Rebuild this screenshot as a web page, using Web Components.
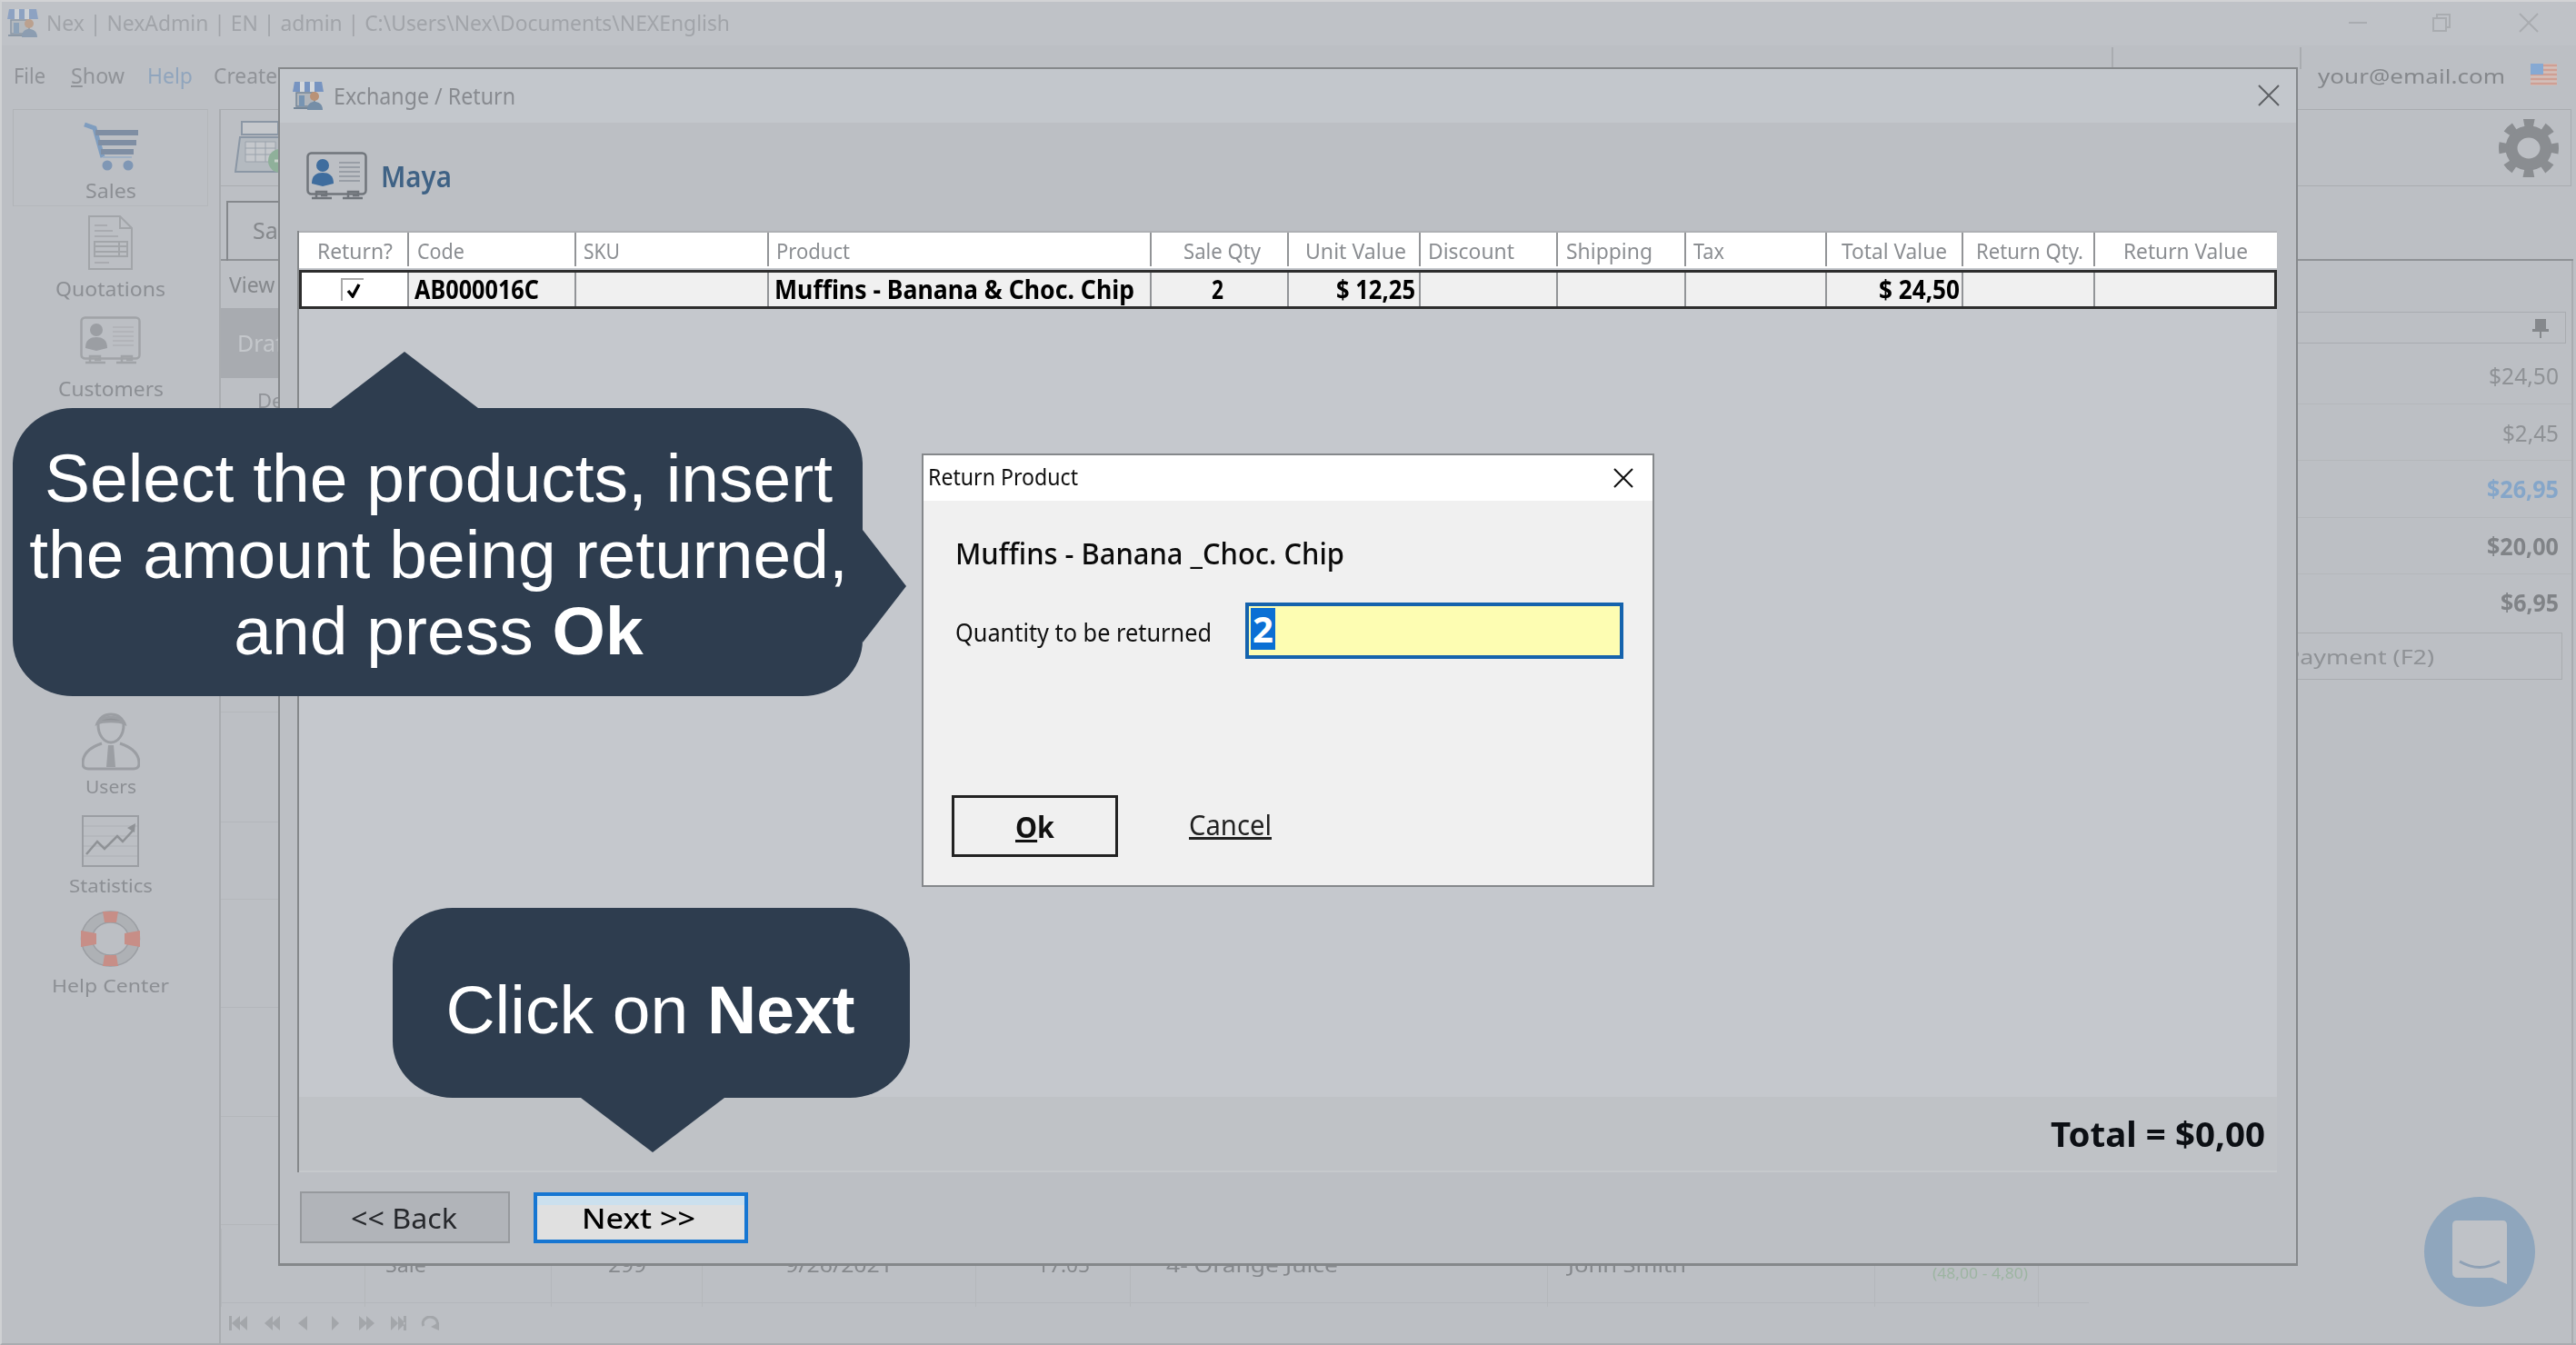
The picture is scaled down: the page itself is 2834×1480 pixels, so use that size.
<!DOCTYPE html>
<html lang="en"><head><meta charset="utf-8"><title>Exchange / Return</title>
<style>
html,body{margin:0;padding:0;background:#bcbfc4;overflow:hidden}
body{font-family:"Noto Sans","Liberation Sans",sans-serif}
</style></head><body>
<nex-app>
  <exchange-dialog></exchange-dialog>
  <return-dialog></return-dialog>
  <call-out style="left:14px;top:449px;width:935px;height:317px;padding:35px 0 0 2px" arrows="top right">
    <span>Select the products, insert</span>
    <span>the amount being returned,</span>
    <span>and press <b>Ok</b></span>
  </call-out>
  <call-out style="left:432px;top:999px;width:569px;height:209px;padding:70px 2px 0 0" arrows="bottom">
    <span>Click on <b>Next</b></span>
  </call-out>
  <chat-bubble></chat-bubble>
</nex-app>
<script>
const shop=(f=1)=>`<svg width="34" height="32" viewBox="0 0 34 32" style="opacity:${f}"><path d="M2 1h30l2 11H0z" fill="#6f8fc0"/><path d="M8 1h5v11H8zM19 1h5v11h-5z" fill="#d5d9de"/><path d="M4 13h20v15H4z" fill="#aeb4ba" stroke="#6c7f93" stroke-width="1.5"/><path d="M7 16h6v12H7z" fill="#6f8fb0"/><path d="M1 30h20" stroke="#6c7f93" stroke-width="2"/><circle cx="24" cy="17" r="5" fill="#b98d6e"/><path d="M16 32c0-7 4-9 8-9s9 2 9 9z" fill="#6d88a4"/></svg>`;
const card=(p,l,b)=>`<svg width="67" height="53" viewBox="0 0 67 53"><rect x="1.5" y="1.5" width="64" height="45" rx="4" fill="none" stroke="${b}" stroke-width="2.5"/><circle cx="18" cy="15" r="7" fill="${p}"/><path d="M6 35c0-9 5-12 12-12s12 3 12 12l-12 3z" fill="${p}"/><path d="M36 12h23M36 17h23M36 22h23M36 27h23M36 32h23" stroke="${l}" stroke-width="1.6"/><path d="M11 52v-8h11v4h-6M46 52v-8h11v4h-6" fill="none" stroke="${b}" stroke-width="2.5"/><path d="M6 51h22M40 51h22" stroke="${b}" stroke-width="2.5"/></svg>`;
const cart=`<svg width="62" height="54" viewBox="0 0 62 54"><path d="M2 3l11 4 9 32" fill="none" stroke="#7f9dbf" stroke-width="5"/><path d="M14 12h47M17 23h42M20 33h36" stroke="#7f8ea3" stroke-width="6"/><path d="M22 39h32" stroke="#9fb0c4" stroke-width="2"/><circle cx="27" cy="48" r="5.5" fill="#7f97b5"/><circle cx="50" cy="48" r="5.5" fill="#7f97b5"/></svg>`;
const doc=`<svg width="49" height="60" viewBox="0 0 49 60" fill="none" stroke="#a2a5a9" stroke-width="2"><path d="M1 1h34l13 13v45H1z"/><path d="M35 1v13h13"/><path d="M7 11h14M7 17h20M7 23h26M7 52h16" stroke-width="1.3"/><path d="M7 29h36v16H7zM7 34h36M7 40h36M34 29v16"/></svg>`;
const user=`<svg width="64" height="64" viewBox="0 0 64 64" fill="none" stroke="#9b9ea3" stroke-width="3"><path d="M18 14c0-8 7-12 14-12s14 4 14 12c0 10-6 19-14 19S18 24 18 14z"/><path d="M17 12c3-9 27-9 30 0-6-3-24-3-30 0z" fill="#8f9296"/><path d="M22 34C10 38 1 44 1 56c0 5 3 6 6 6h50c3 0 6-1 6-6 0-12-9-18-21-22"/><path d="M29 36h6l2 24h-10z" fill="#9b9ea3" stroke="none"/></svg>`;
const chart=`<svg width="63" height="57" viewBox="0 0 63 57" fill="none"><rect x="1" y="1" width="61" height="55" stroke="#9b9ea3" stroke-width="2"/><path d="M2 12h59M2 23h59M2 34h59M2 45h59" stroke="#aeb1b5" stroke-width="1.2"/><path d="M5 43l12-14 8 8 14-14 6 6 12-13" stroke="#8f9296" stroke-width="2.5"/><path d="M50 14l9-5-1 10z" fill="#8f9296"/></svg>`;
const buoy=`<svg width="67" height="64" viewBox="0 0 67 64"><ellipse cx="33.500" cy="32" rx="26" ry="24" fill="none" stroke="#aeb1b5" stroke-width="13"/><ellipse cx="33.500" cy="32" rx="32" ry="30" fill="none" stroke="#9b9ea3" stroke-width="1.500"/><ellipse cx="33.500" cy="32" rx="20" ry="18" fill="#bcbfc4" stroke="#9b9ea3" stroke-width="1.500"/><path d="M25 2h17l-2 12H27zM25 62h17l-2-12H27zM1 23l17 3v12L1 41zM66 23l-17 3v12l17 3z" fill="#c78e87"/></svg>`;
const reg=`<svg width="64" height="60" viewBox="0 0 64 60" fill="none"><rect x="8" y="1" width="40" height="14" fill="#c5c8cc" stroke="#8b97a5" stroke-width="2"/><path d="M6 18h44l6 38H1z" fill="#b4bac0" stroke="#8b97a5" stroke-width="2"/><path d="M12 23h33v22H12z" fill="#c5c8cc" stroke="#9aa2ab"/><path d="M12 30h33M12 37h33M23 23v22M34 23v22" stroke="#9aa2ab"/><circle cx="50" cy="44" r="13" fill="#8fb09a"/><path d="M44 44h12" stroke="#c9d3cc" stroke-width="3"/></svg>`;
const gear=`<svg width="66" height="64" viewBox="0 0 66 64" fill="none" stroke="#8a8d91"><ellipse cx="33" cy="32" rx="19" ry="18" stroke-width="13"/><circle cx="33" cy="32" r="28" stroke-width="10" stroke-dasharray="11 11" stroke-dashoffset="5.500"/></svg>`;
const flag=`<svg width="29" height="24" viewBox="0 0 29 24"><rect width="29" height="24" fill="#d3c0bb"/><path d="M0 2h29M0 7h29M0 12h29M0 17h29M0 22h29" stroke="#cf9f94" stroke-width="2.400"/><rect width="14" height="12" fill="#86a9d3"/></svg>`;

class Base extends HTMLElement{
  constructor(){super();this.attachShadow({mode:'open'}).innerHTML=this.constructor.html}
}
class NexApp extends Base{static html=`<style>
:host{display:block;position:relative;width:2834px;height:1480px;overflow:hidden;background:#bcbfc4;color:#909398;font-family:"Noto Sans","Liberation Sans",sans-serif;font-size:20px}
.shell{display:flex;flex-direction:column;height:1480px;box-sizing:border-box;border-top:2px solid #d2d3d5;border-left:2px solid #cfd1d3;border-bottom:2px solid #a9acb0;filter:blur(.6px)}
.title{height:48px;display:flex;align-items:center;background:#bfc2c7;flex:none;padding-bottom:3px;box-sizing:border-box}
.title .tx{font-size:24px;color:#a1a4a9}
.ctl{margin-left:auto;display:flex;margin-right:40px}
.ctl svg{display:block}
.menu{height:70px;flex:none;display:flex;align-items:center;font-size:23px;position:relative;background:#bcbfc4;padding-bottom:5px;box-sizing:border-box}
.menu .m{margin-left:13px}
.menu .sep{align-self:flex-start;width:2px;height:24px;background:#a9acb0;margin-top:2px}
.right{margin-left:auto;display:flex;align-items:center;align-self:stretch}
.mail{font-size:22px;color:#85888c;margin:0 28px 0 18px}
.body{flex:1;display:flex;min-height:0}
.side{flex:none;width:239px;border-right:2px solid #a9acb0;display:flex;flex-direction:column;align-items:center;padding-right:0}
.work{flex:1;display:flex;flex-direction:column;min-width:0;padding-right:3px}
.tools{height:85px;flex:none;border:1.500px solid #a9acb0;margin-right:2px;display:flex;align-items:center;justify-content:space-between;box-sizing:border-box;padding:0 13px 0 15px;border-left:0}
.tabs{height:82px;flex:none;border-bottom:2px solid #8f9296;box-sizing:border-box;padding:16px 0 0 6px}
.tab{display:block;width:200px;height:66px;border:2px solid #85888c;border-bottom:0;box-sizing:border-box;font-size:25px;line-height:60px;padding-left:27px;color:#85888c}
.lower{flex:1;display:flex;min-height:0;border-right:2px solid #a9acb0}
.tbl{flex:1;display:flex;flex-direction:column;min-width:0}
.view{height:52px;padding-left:9px;line-height:52px;font-size:23px;flex:none;color:#85888c}
.draft{height:77px;background:#a8abb0;color:#c4c7cb;font-size:25px;line-height:77px;padding-left:18px;flex:none;box-sizing:border-box}
.de{height:49px;padding-left:40px;line-height:48px;font-size:22px;flex:none}
.ln{flex:none;border-bottom:1.500px solid #b4b7bb;box-sizing:border-box;width:66px}
.sale{height:86px;flex:none;display:grid;grid-template-columns:158px 205px 166px 301px 170px 459px 360px 180px 66px;align-items:center;padding-top:4px;box-sizing:border-box;font-size:22px;color:#85888c;border-bottom:1.500px solid #b4b7bb}
.sale>*{height:86px;line-height:78px;border-left:1.500px solid #b4b7bb;box-sizing:border-box;white-space:nowrap;overflow:visible}
.sale .g{color:#9db5a2;font-size:16px;line-height:98px}
.pager{flex:1;display:flex;align-items:center;padding-left:9px}
.pane{flex:none;width:531px;display:flex;flex-direction:column;align-items:stretch;font-size:26px}
.ph{margin:56px 6px 4px 0;height:35px;border:1.500px solid #a9acb0;display:flex;align-items:center;justify-content:flex-end;padding-right:18px;box-sizing:border-box;flex:none}
.v{height:62.500px;flex:none;line-height:62px;text-align:right;padding-right:14px;box-sizing:border-box;border-bottom:1.500px solid #b4b7bb;color:#8f9296}
.v.b{font-weight:700;color:#808387}.v.c{font-weight:700;color:#85a6c9}
.pay{margin:1px 10px 0 75px;height:50px;border:1.500px solid #a9acb0;display:flex;align-items:center;justify-content:center;flex:none;font-size:22px;color:#8f9296}
</style>
<div class="shell">
 <div class="title"><span class="app" style="margin:0 9px 0 6px;display:flex">${shop(.62)}</span><nx-text class="tx" w="752">Nex | NexAdmin | EN | admin | C:\\Users\\Nex\\Documents\\NEXEnglish</nx-text>
  <span class="ctl"><svg width="210" height="24" viewBox="0 0 210 24" fill="none" stroke="#a9acb0" stroke-width="2"><path d="M0 12h20"/><path d="M93 7h14v14H93zM97 7V3h14v14h-4"/><path d="M188 2l20 20M208 2l-20 20"/></svg></span></div>
 <div class="menu"><nx-text class="m" w="35">File</nx-text><nx-text class="m" style="margin-left:28px" w="59"><u>S</u>how</nx-text><nx-text class="m" style="margin-left:25px;color:#90a5bd" w="50">Help</nx-text><nx-text class="m" style="margin-left:23px;color:#909398" w="70">Create</nx-text>
  <span class="right"><span class="sep" style="margin-right:205px"></span><span class="sep"></span><nx-text class="mail" w="206">your@email.com</nx-text><span style="display:flex;margin-right:21px;margin-top:-1px">${flag}</span></span></div>
 <div class="body">
  <div class="side">
   <side-item box style="height:107px;padding-top:13px" gap="12"><span slot="i">${cart}</span><nx-text style="font-size:22px" w="56">Sales</nx-text></side-item>
   <side-item style="margin-top:10px" gap="8"><span slot="i">${doc}</span><nx-text style="font-size:22px" w="121">Quotations</nx-text></side-item>
   <side-item style="margin-top:17px" gap="14"><span slot="i">${card('#9b9ea3','#aeb1b5','#a0a3a7')}</span><nx-text style="font-size:22px" w="116">Customers</nx-text></side-item>
   <div style="height:302px;line-height:24px;padding-top:280px;box-sizing:border-box;margin-left:-22px;flex:none;font-size:20px">g</div>
   <side-item style="margin-top:41px" gap="6"><span slot="i">${user}</span><nx-text w="56">Users</nx-text></side-item>
   <side-item style="margin-top:19px" gap="9"><span slot="i">${chart}</span><nx-text w="92">Statistics</nx-text></side-item>
   <side-item style="margin-top:14px" gap="8"><span slot="i">${buoy}</span><nx-text w="129">Help Center</nx-text></side-item>
  </div>
  <div class="work">
   <div class="tools"><span style="display:flex">${reg}</span><span style="display:flex">${gear}</span></div>
   <div class="tabs"><span class="tab">Sales</span></div>
   <div class="lower">
    <div class="tbl">
     <div class="view">View</div><div class="draft">Draft</div><div class="de">De</div>
     <div class="ln" style="height:319px"></div><div class="ln" style="height:121px"></div><div class="ln" style="height:85px"></div><div class="ln" style="height:119px"></div><div class="ln" style="height:120px"></div><div class="ln" style="height:119px"></div>
     <div class="sale"><span></span><span style="padding-left:22px"><nx-text w="45">Sale</nx-text></span><span style="padding-left:62px"><nx-text w="42">299</nx-text></span><span style="padding-left:91px"><nx-text w="118">9/26/2021</nx-text></span><span style="padding-left:67px"><nx-text w="58">17:05</nx-text></span><span style="padding-left:39px"><nx-text w="189">4- Orange Juice</nx-text></span><span style="padding-left:22px"><nx-text w="130">John Smith</nx-text></span><span class="g" style="padding-left:63px"><nx-text w="105">(48,00 - 4,80)</nx-text></span><span></span></div>
     <div class="pager"><svg width="232" height="16" viewBox="0 0 232 16" fill="#a3a6aa"><path d="M0 0h3v16H0zM12 0v16L3 8zM20 0v16l-9-8zM48 0v16l-9-8zM56 0v16l-9-8zM86 0v16l-10-8zM113 0v16l8-8zM143 0v16l9-8zM151 0v16l9-8zM178 0v16l8-8zM186 0v16l8-8zM192 0h3v16h-3z"/><path d="M214 11a8 7 0 1 1 13 2" fill="none" stroke="#a3a6aa" stroke-width="3"/><path d="M222 12l9 4v-9z"/></svg></div>
    </div>
    <div class="pane">
     <div class="ph"><svg width="18" height="22" viewBox="0 0 18 22" fill="#85888c"><path d="M3 1h12v11h3v3H0v-3h3zM8 15h2v7H8z"/></svg></div>
     <div class="v"><nx-text w="77">$24,50</nx-text></div><div class="v"><nx-text w="62">$2,45</nx-text></div><div class="v c"><nx-text w="79">$26,95</nx-text></div><div class="v b"><nx-text w="79">$20,00</nx-text></div><div class="v b" style="border:0"><nx-text w="64">$6,95</nx-text></div>
     <div class="pay"><nx-text w="164">Payment (F2)</nx-text></div>
    </div>
   </div>
  </div>
 </div>
</div>
<slot></slot>`}
class SideItem extends Base{static html=`<style>
:host{display:flex;flex-direction:column;align-items:center;flex:none;box-sizing:border-box}
:host([box]){width:215px;border:1.500px solid #b0b3b7;border-bottom-color:#b4b7bb;border-right-color:#b4b7bb}
.l{line-height:24px;white-space:nowrap;font-size:20px;color:#8c8f94}
.i{display:flex}
slot[name=i]::slotted(*){display:flex}
</style><div class="i"><slot name="i"></slot></div><div class="l"><slot></slot></div>`;
 connectedCallback(){this.shadowRoot.querySelector('.l').style.marginTop=(this.getAttribute('gap')-0-(this.hasAttribute('box')?3:0))+'px'}}
class ExchangeDialog extends Base{static html=`<style>
:host{position:absolute;left:306px;top:74px;width:2222px;height:1319px;box-sizing:border-box;border:2px solid #85888b;border-bottom-width:3px;display:flex;flex-direction:column;background:#bcbfc4;font-family:"Noto Sans","Liberation Sans",sans-serif;color:#000}
.t{height:59px;flex:none;background:#c3c7cc;display:flex;align-items:center;padding:0 0 2px 14px;font-size:26px;color:#888b90;box-sizing:border-box}
.t>span:first-child{display:flex;margin-right:11px}
.x{margin-left:auto;margin-right:18px;display:flex}
.who{height:119px;flex:none;display:flex;align-items:center;padding:0 0 2px 29px;box-sizing:border-box;gap:15px;font-size:33px;font-weight:600;color:#3f6285}
.panel{flex:1;min-height:0;margin:0 21px 0 19px;border-left:2px solid #85888b;display:flex;flex-direction:column;background:#c5c8cd}
.grid{display:grid;grid-template-columns:121px 184px 212px 421px 151px 145px 151px 141px 155px 150px 145px 199px;flex:none}
.h{height:41px;background:#fff;margin-bottom:2px;box-shadow:inset 0 2px #aeb0b4}
.h>span{font-size:23px;color:#8b8e92;line-height:41px;white-space:nowrap;border-right:2px solid #929497;box-sizing:border-box;height:37px;margin-top:2px}
.h>span:last-child{border:0}
.r{height:43px;outline:3px solid #2d2d2d;outline-offset:-3px;background:#f0f0f0;position:relative}
.r>span{font-size:28px;font-weight:700;line-height:43px;white-space:nowrap;border-right:2px solid #929497;box-sizing:border-box}
.r>span:last-child{border:0}
.ck{background:#fff;display:flex;align-items:center;padding-left:46px}
.box{width:25px;height:25px;border-left:2px solid #a8a8a8;border-top:2px solid #a8a8a8;box-sizing:border-box;display:flex;align-items:center;justify-content:center}
.sp{flex:1}
.tot{height:81px;flex:none;background:#bfc2c6;border-bottom:2px solid #c6c9cc;box-sizing:content-box;display:flex;align-items:center;justify-content:flex-end;padding-right:13px;font-size:37px;font-weight:700;color:#0c0f14}
.tot,.who,.t,.grid,.f{filter:blur(.4px)}
.f{height:100px;flex:none;padding:21px 0 0 22px;box-sizing:border-box;display:flex;gap:26px;font-size:31px}
.f span{height:57px;display:flex;align-items:center;justify-content:center;box-sizing:border-box}
.bk{width:231px;background:#b1b4b9;border:2px solid #96999d;color:#26282c;padding-right:3px}
.nx{width:236px;background:#e0e0e0;border:4px solid #1676d2;box-shadow:inset 0 10px #cbe0ee;font-weight:500;color:#000;margin-top:1px;height:56px!important;padding-right:5px}
</style>
<div class="t"><span>${shop(.9)}</span><nx-text w="200">Exchange / Return</nx-text><span class="x"><svg width="24" height="24" viewBox="0 0 24 24" stroke="#5e6165" stroke-width="2" fill="none"><path d="M1 1l22 22M23 1L1 23"/></svg></span></div>
<div class="who">${card('#3f6d9e','#8d949c','#70757b').replace('viewBox','style="flex:none" viewBox')}<nx-text w="78">Maya</nx-text></div>
<div class="panel">
 <div class="grid h">
  <span style="padding-left:20px"><nx-text w="83">Return?</nx-text></span><span style="padding-left:9px"><nx-text w="52">Code</nx-text></span><span style="padding-left:8px"><nx-text w="40">SKU</nx-text></span><span style="padding-left:8px"><nx-text w="81">Product</nx-text></span><span style="padding-left:35px"><nx-text w="85">Sale Qty</nx-text></span><span style="padding-left:18px"><nx-text w="111">Unit Value</nx-text></span><span style="padding-left:8px"><nx-text w="95">Discount</nx-text></span><span style="padding-left:9px"><nx-text w="95">Shipping</nx-text></span><span style="padding-left:8px"><nx-text w="34">Tax</nx-text></span><span style="padding-left:16px"><nx-text w="116">Total Value</nx-text></span><span style="padding-left:14px"><nx-text w="118">Return Qty.</nx-text></span><span style="padding-left:31px"><nx-text w="137">Return Value</nx-text></span>
 </div>
 <div class="grid r">
  <span class="ck"><i class="box"><svg width="16" height="16" viewBox="0 0 16 16" fill="none" stroke="#000" stroke-width="3.500"><path d="M2 8l5 6 7-13"/></svg></i></span><span style="padding-left:6px"><nx-text w="137">AB000016C</nx-text></span><span></span><span style="padding-left:6px"><nx-text w="396">Muffins - Banana &amp; Choc. Chip</nx-text></span><span style="padding-left:66px"><nx-text w="13">2</nx-text></span><span style="padding-left:52px"><nx-text w="87">$ 12,25</nx-text></span><span></span><span></span><span></span><span style="padding-left:57px"><nx-text w="89">$ 24,50</nx-text></span><span></span><span></span>
 </div>
 <div class="sp"></div>
 <div class="tot"><nx-text w="236">Total = $0,00</nx-text></div>
</div>
<div class="f"><span class="bk"><nx-text w="117">&lt;&lt; Back</nx-text></span><span class="nx"><nx-text w="125">Next &gt;&gt;</nx-text></span></div>`}
class ReturnDialog extends Base{static html=`<style>
:host{position:absolute;left:1014px;top:499px;width:806px;height:477px;box-sizing:border-box;border:2px solid #85888b;background:#f0f0f0;color:#000;display:flex;flex-direction:column;font-family:"Noto Sans","Liberation Sans",sans-serif}
.t{height:50px;flex:none;background:#fff;display:flex;align-items:center;padding:0 0 5px 5px;box-sizing:border-box;font-size:25px;color:#111}
.x{margin-left:auto;margin-right:21px;display:flex;margin-top:5px}
.b{flex:1;padding:0 0 0 35px;filter:blur(.35px)}
h2{margin:38px 0 0;font-size:33px;line-height:40px;font-weight:500;color:#0b0b0b}
.row{display:flex;align-items:center;margin-top:34px;font-size:27px;color:#111}
.inp{margin-left:37px;width:416px;height:62px;box-sizing:border-box;border:4px solid #1563ad;background:#fdfdb2;padding:2px;display:flex}
.sel{width:27px;height:46px;background:#0a6fd4;color:#fff;font-size:40px;line-height:46px;text-align:center;font-weight:700}
.btns{display:flex;align-items:center;margin:150px 0 0 -4px}
.ok{width:183px;height:68px;border:3px solid #222;box-sizing:border-box;display:flex;align-items:center;justify-content:center;font-size:33px;font-weight:700;color:#111}
.c{margin-left:78px;font-size:31px;color:#222;position:relative;top:-2px}
</style>
<div class="t"><nx-text w="165">Return Product</nx-text><span class="x"><svg width="22" height="22" viewBox="0 0 22 22" stroke="#111" stroke-width="2" fill="none"><path d="M1 1l20 20M21 1L1 21"/></svg></span></div>
<div class="b"><h2><nx-text w="428">Muffins - Banana _Choc. Chip</nx-text></h2>
<div class="row"><nx-text w="282" style="position:relative;top:1px">Quantity to be returned</nx-text><div class="inp"><span class="sel">2</span></div></div>
<div class="btns"><span class="ok"><nx-text w="43"><u>O</u>k</nx-text></span><span class="c"><nx-text w="91"><u>Cancel</u></nx-text></span></div></div>`}
class CallOut extends Base{static html=`<style>
:host{position:absolute;box-sizing:border-box;background:#2e3d4f;border-radius:66px / 62px;color:#fff;font:75px/84px "Liberation Sans",Arial,sans-serif;text-align:center}
.a{position:absolute;background:#2e3d4f;display:none}
:host([arrows~=top]) .top{display:block;left:350px;top:-62px;width:162px;height:62px;clip-path:polygon(50% 0,100% 100%,0 100%)}
:host([arrows~=right]) .right{display:block;right:-48px;top:134px;width:48px;height:124px;clip-path:polygon(0 0,100% 50%,0 100%)}
:host([arrows~=bottom]) .bottom{display:block;left:207px;bottom:-60px;width:158px;height:60px;clip-path:polygon(0 0,100% 0,50% 100%)}
::slotted(span){display:block;white-space:nowrap}
</style><i class="a top"></i><i class="a right"></i><i class="a bottom"></i><slot></slot>`}
class ChatBubble extends Base{static html=`<style>
:host{position:absolute;left:2667px;top:1317px;width:122px;height:121px;border-radius:50%;background:#8fa6bd;display:flex;align-items:center;justify-content:center}
svg{display:block}
</style><svg width="60" height="70" viewBox="0 0 60 70"><path d="M5 0h50q5 0 5 5v65l-16-7H6q-6 0-6-6V5q0-5 5-5z" fill="#bfc2c7"/><path d="M8 45q22 13 44 0" fill="none" stroke="#8fa1b5" stroke-width="3"/></svg>`}
customElements.define('side-item',SideItem);
customElements.define('exchange-dialog',ExchangeDialog);
customElements.define('return-dialog',ReturnDialog);
customElements.define('call-out',CallOut);
customElements.define('chat-bubble',ChatBubble);
customElements.define('nex-app',NexApp);
class NxText extends HTMLElement{
  constructor(){super();this.attachShadow({mode:'open'}).innerHTML=`<style>:host{display:inline-block;white-space:nowrap}span{display:inline-block;transform-origin:0 50%}</style><span><slot></slot></span>`}
  connectedCallback(){const w=+this.getAttribute('w');if(!w)return;const s=this.shadowRoot.querySelector('span');const r=s.getBoundingClientRect().width;if(r>0){s.style.transform=`scaleX(${w/r})`;this.style.width=w+'px'}}
}
customElements.define('nx-text',NxText);
</script>
</body></html>
